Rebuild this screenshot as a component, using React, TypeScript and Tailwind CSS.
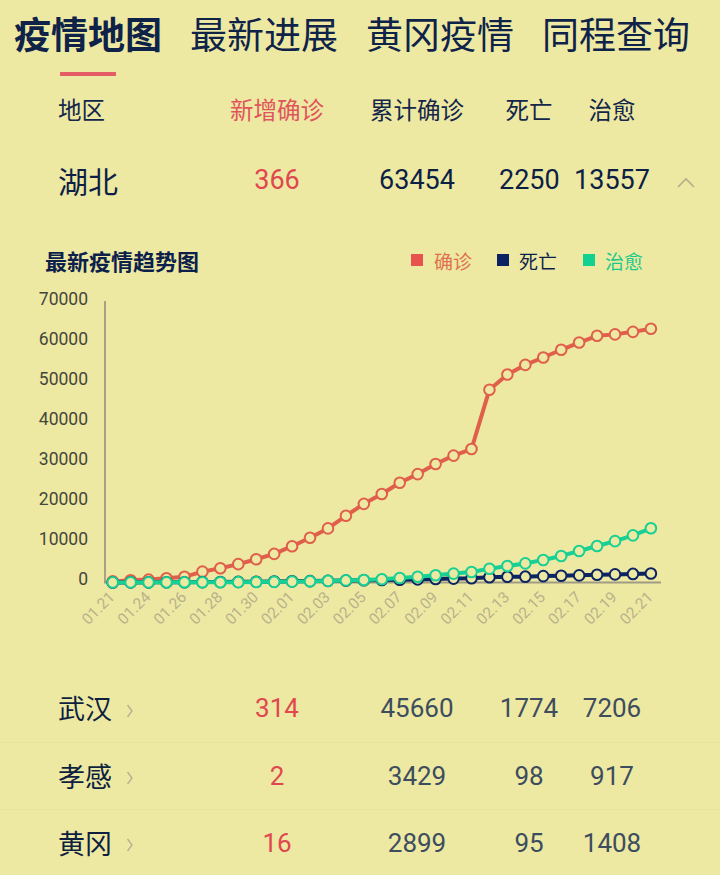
import React from 'react'

const CN = "font-['Noto_Sans_CJK_SC',sans-serif]"
const NUM = "font-['Roboto','Noto_Sans_CJK_SC',sans-serif]"

const dates = [
  '01.21', '01.23', '01.24', '01.25', '01.26', '01.27', '01.28', '01.29', '01.30', '01.31',
  '02.01', '02.02', '02.03', '02.04', '02.05', '02.06', '02.07', '02.08', '02.09', '02.10',
  '02.11', '02.12', '02.13', '02.14', '02.15', '02.16', '02.17', '02.18', '02.19', '02.20', '02.21',
]

const confirmed = [
  270, 549, 729, 1052, 1423, 2714, 3554, 4586, 5806, 7153, 9074, 11177, 13522, 16678, 19665,
  22112, 24953, 27100, 29631, 31728, 33366, 48206, 51986, 54406, 56249, 58182, 59989, 61682,
  62031, 62662, 63454,
]
const dead = [
  6, 24, 39, 52, 76, 100, 125, 162, 204, 249, 294, 350, 414, 479, 549, 618, 699, 780, 871, 974,
  1068, 1310, 1426, 1457, 1596, 1696, 1789, 1921, 2029, 2144, 2250,
]
const cured = [
  25, 31, 32, 42, 44, 47, 80, 90, 116, 166, 215, 295, 396, 520, 633, 817, 1115, 1439, 1795, 2222,
  2639, 3441, 4131, 4774, 5623, 6639, 7862, 9128, 10337, 11788, 13557,
]

const BG = '#ede9a3'
// svg starts at page y = 276
const px = (i: number) => 112.7 + i * 17.94
const py = (v: number) => 306.5 - v / 250

function Series({ data, color }: { data: number[]; color: string }) {
  const pts = data.map((v, i) => `${px(i)},${py(v)}`).join(' ')
  return (
    <g>
      <polyline points={pts} fill="none" stroke={color} strokeWidth={4} strokeLinejoin="round" />
      {data.map((v, i) => (
        <circle key={i} cx={px(i)} cy={py(v)} r={5.3} fill={BG} stroke={color} strokeWidth={2} />
      ))}
    </g>
  )
}

function TrendChart() {
  const ticks = [0, 10000, 20000, 30000, 40000, 50000, 60000, 70000]
  return (
    <svg width={720} height={399} className="block">
      {ticks.map(t => (
        <text
          key={t}
          x={88}
          y={py(t) - 2}
          textAnchor="end"
          dominantBaseline="middle"
          fontSize={17.5}
          fontFamily="Roboto, sans-serif"
          fill="#45463a"
        >
          {t}
        </text>
      ))}
      <line x1={105} y1={25} x2={105} y2={307} stroke="#a8a282" strokeWidth={2} />
      <line x1={104} y1={306.5} x2={661} y2={306.5} stroke="#a09c84" strokeWidth={2} />
      {dates.map((d, i) =>
        i % 2 === 0 ? (
          <text
            key={d}
            x={px(i) + 3}
            y={322}
            textAnchor="end"
            fontSize={15.5}
            fontFamily="Roboto, sans-serif"
            fill="#b9b28a"
            transform={`rotate(-45 ${px(i) + 3} 322)`}
          >
            {d}
          </text>
        ) : null
      )}
      <Series data={confirmed} color="#e05f4b" />
      <Series data={dead} color="#0c2461" />
      <Series data={cured} color="#18d093" />
    </svg>
  )
}

function ChevronUp() {
  return (
    <svg width={20} height={12} viewBox="0 0 20 12" className="mt-1">
      <polyline points="2,11 10,3 18,11" fill="none" stroke="#b3ad8c" strokeWidth={1.6} />
    </svg>
  )
}

function ChevronRight() {
  return (
    <svg width={8} height={16} viewBox="0 0 8 16" className="ml-[14px] mt-1">
      <polyline points="1.5,2 6,8 1.5,14" fill="none" stroke="#b7b193" strokeWidth={1.4} />
    </svg>
  )
}

const cols = 'grid grid-cols-[161px_116px_164px_60px_106px_1fr] items-center pl-[58px]'

const cities = [
  { name: '武汉', add: 314, total: 45660, dead: 1774, cured: 7206 },
  { name: '孝感', add: 2, total: 3429, dead: 98, cured: 917 },
  { name: '黄冈', add: 16, total: 2899, dead: 95, cured: 1408 },
]

export default function App() {
  return (
    <div className={`w-[720px] h-[875px] overflow-hidden bg-[#ede9a3] ${CN}`}>
      <div className="h-[66px] flex items-center gap-[28px] pl-[14px] text-[37px] leading-none text-[#0f2349]">
        <span className="font-bold">疫情地图</span>
        <span>最新进展</span>
        <span>黄冈疫情</span>
        <span>同程查询</span>
      </div>
      <div className="mt-[6px] ml-[60px] w-[56px] h-[4px] bg-[#e35c66]" />

      <div className={`${cols} h-[68px] text-[23.5px] text-[#14264a]`}>
        <span>地区</span>
        <span className="text-center text-[#e0555c]">新增确诊</span>
        <span className="text-center">累计确诊</span>
        <span className="text-center">死亡</span>
        <span className="text-center">治愈</span>
      </div>

      <div className={`${cols} h-[72px] text-[#0e1f45]`}>
        <span className="text-[30px]">湖北</span>
        <span className={`text-center text-[27px] text-[#e0474f] ${NUM}`}>366</span>
        <span className={`text-center text-[27px] ${NUM}`}>63454</span>
        <span className={`text-center text-[27px] ${NUM}`}>2250</span>
        <span className={`text-center text-[27px] ${NUM}`}>13557</span>
        <span className="flex justify-center pr-[14px]">
          <ChevronUp />
        </span>
      </div>

      <div className="pt-[30px]">
        <div className="h-[28px] flex items-center pl-[45px] pr-[77px]">
          <span className="text-[22px] font-bold text-[#0d1f4b] leading-none">最新疫情趋势图</span>
          <div className="ml-auto flex items-center text-[19px] leading-none">
            <span className="w-[12px] h-[12px] bg-[#e8524c]" />
            <span className="ml-[11px] text-[#e0704f]">确诊</span>
            <span className="ml-[25px] w-[12px] h-[12px] bg-[#0b2262]" />
            <span className="ml-[10px] text-[#0d1f4b]">死亡</span>
            <span className="ml-[26px] w-[12px] h-[12px] bg-[#12d08f]" />
            <span className="ml-[10px] text-[#1ec98a]">治愈</span>
          </div>
        </div>
        <div className="mt-[2px]">
          <TrendChart />
        </div>
      </div>

      <div>
        {cities.map((c, i) => (
          <div
            key={c.name}
            className={`${cols} h-[67px] ${i > 0 ? 'border-t border-[#e8e4a0]' : ''} text-[#3d4d5e]`}
          >
            <span className="flex items-center text-[27px] text-[#0f1f40]">
              {c.name}
              <ChevronRight />
            </span>
            <span className={`text-center text-[26px] text-[#e0474f] ${NUM}`}>{c.add}</span>
            <span className={`text-center text-[26px] ${NUM}`}>{c.total}</span>
            <span className={`text-center text-[26px] ${NUM}`}>{c.dead}</span>
            <span className={`text-center text-[26px] ${NUM}`}>{c.cured}</span>
            <span />
          </div>
        ))}
      </div>
    </div>
  )
}
